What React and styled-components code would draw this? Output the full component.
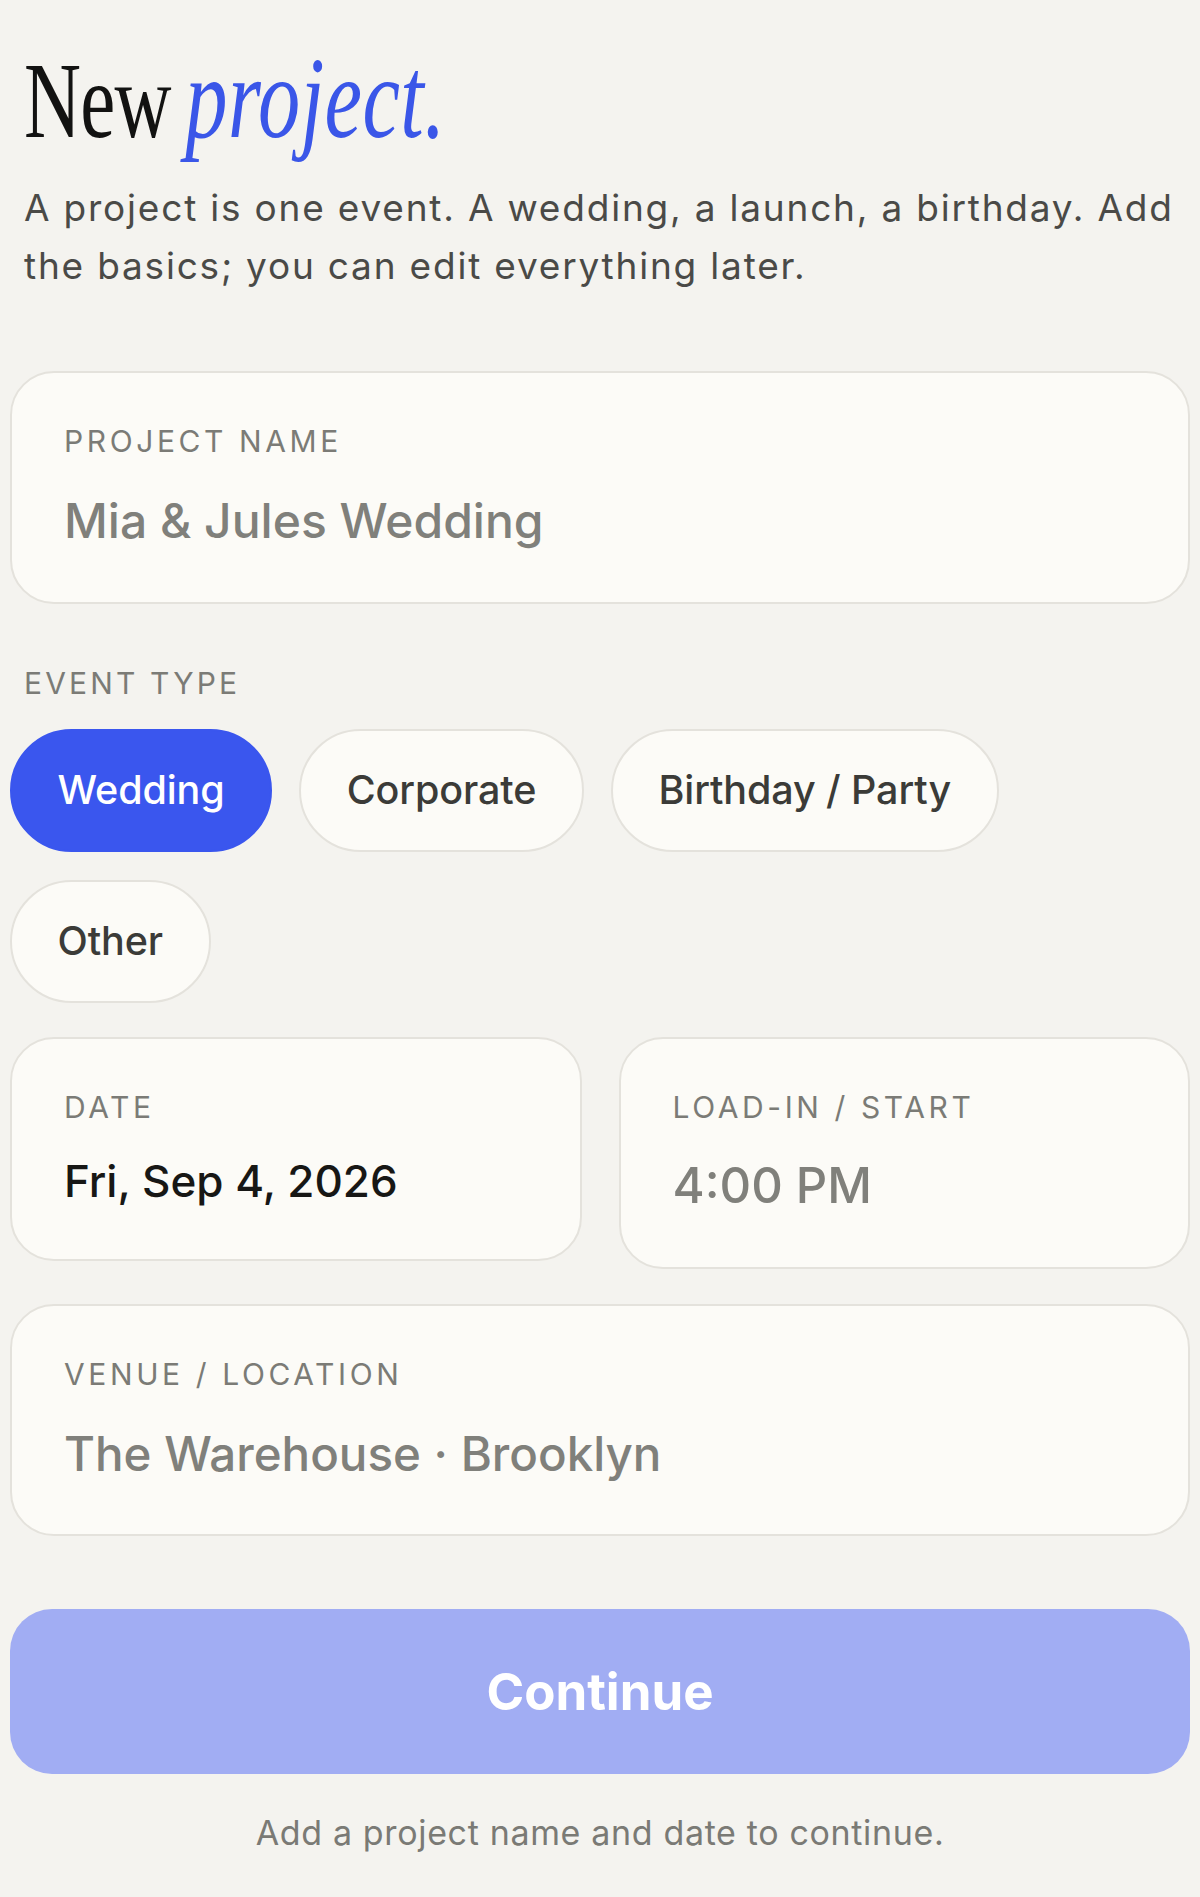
import React from "react";
import styled, { createGlobalStyle } from "styled-components";

const GlobalStyle = createGlobalStyle`
  html, body {
    margin: 0;
    padding: 0;
    background: #f4f3ef;
  }
  body {
    font-family: "Inter", "Noto Sans", sans-serif;
    -webkit-font-smoothing: antialiased;
  }
  * { box-sizing: border-box; }
`;

const Page = styled.main`
  min-height: 1897px;
  padding: 47px 10px 40px;
  display: flex;
  flex-direction: column;
`;

const Intro = styled.header`
  padding: 0 0 0 14px;
  display: flex;
  flex-direction: column;
  gap: 24px;
`;

const Title = styled.h1`
  margin: 0;
  display: inline-block;
  align-self: flex-start;
  font-family: "Liberation Serif", "Times New Roman", serif;
  font-weight: 400;
  font-size: 108px;
  line-height: 1;
  letter-spacing: -1px;
  word-spacing: -6px;
  color: #121211;
  transform: scaleX(0.73);
  transform-origin: left center;
  white-space: nowrap;
`;

const Accent = styled.em`
  font-style: italic;
  font-size: 1.07em;
  line-height: 0;
  letter-spacing: 0.6px;
  color: #3a56e8;
`;

const Lead = styled.p`
  margin: 0;
  font-size: 37px;
  line-height: 58px;
  color: #4a4a47;
  letter-spacing: 1.8px;
`;

const Form = styled.section`
  margin-top: 76px;
  display: flex;
  flex-direction: column;
`;

const FieldCard = styled.div`
  background: #fcfbf7;
  border: 2px solid #e4e2dc;
  border-radius: 44px;
  padding: 50px 52px 52px;
  display: flex;
  flex-direction: column;
`;

const FieldLabel = styled.span`
  font-size: 30px;
  line-height: 36px;
  letter-spacing: 0.12em;
  text-transform: uppercase;
  color: #7b7b76;
`;

const FieldValue = styled.span`
  margin-top: ${(p) => p.$gap}px;
  font-size: ${(p) => p.$size}px;
  line-height: 1.2;
  font-weight: 500;
  color: ${(p) => (p.$filled ? "#171715" : "#80807b")};
`;

const SectionLabel = styled.h2`
  margin: 61px 0 0;
  padding: 0 14px;
  font-size: 30px;
  line-height: 36px;
  font-weight: 400;
  letter-spacing: 0.105em;
  text-transform: uppercase;
  color: #7b7b76;
`;

const ChipRow = styled.div`
  margin-top: 28px;
  display: flex;
  flex-wrap: wrap;
  gap: 28px 27px;
`;

const Chip = styled.button`
  height: 123px;
  padding: 0 45.5px;
  border-radius: 999px;
  border: 2px solid ${(p) => (p.$active ? "#3a56ee" : "#e4e2dc")};
  background: ${(p) => (p.$active ? "#3a56ee" : "#fcfbf7")};
  color: ${(p) => (p.$active ? "#ffffff" : "#3b3b38")};
  font-family: "Inter", "Noto Sans", sans-serif;
  font-size: 39.5px;
  font-weight: 500;
  letter-spacing: -0.1px;
  display: inline-flex;
  align-items: center;
  cursor: pointer;
`;

const TwoCol = styled.div`
  margin-top: 34px;
  display: grid;
  grid-template-columns: 1fr 1fr;
  gap: 37px;
  align-items: start;
`;

const Stack = styled.div`
  margin-top: 35px;
`;

const PrimaryButton = styled.button`
  margin-top: 73px;
  height: 165px;
  width: 100%;
  border: none;
  border-radius: 42px;
  background: #a1adf3;
  color: #ffffff;
  font-family: "Inter", "Noto Sans", sans-serif;
  font-size: 51px;
  font-weight: 700;
  cursor: not-allowed;
`;

const Hint = styled.p`
  margin: 39px 0 0;
  text-align: center;
  font-size: 34px;
  line-height: 1.2;
  color: #7a7a75;
  letter-spacing: 0.65px;
`;

const eventTypes = ["Wedding", "Corporate", "Birthday / Party", "Other"];

function Field({ label, value, size = 48, gap = 32, filled = false }) {
  return (
    <FieldCard>
      <FieldLabel>{label}</FieldLabel>
      <FieldValue $size={size} $gap={gap} $filled={filled}>
        {value}
      </FieldValue>
    </FieldCard>
  );
}

export default function App() {
  return (
    <>
      <GlobalStyle />
      <Page>
        <Intro>
          <Title>
            New <Accent>project.</Accent>
          </Title>
          <Lead>
            A project is one event. A wedding, a launch, a birthday. Add the
            basics; you can edit everything later.
          </Lead>
        </Intro>

        <Form>
          <Field label="Project name" value="Mia & Jules Wedding" gap={33} />

          <SectionLabel>Event type</SectionLabel>
          <ChipRow>
            {eventTypes.map((t) => (
              <Chip key={t} $active={t === "Wedding"}>
                {t}
              </Chip>
            ))}
          </ChipRow>

          <TwoCol>
            <Field label="Date" value="Fri, Sep 4, 2026" size={44} gap={30} filled />
            <Field label="Load-in / Start" value="4:00 PM" size={49} gap={32} />
          </TwoCol>

          <Stack>
            <Field label="Venue / Location" value="The Warehouse · Brooklyn" size={47.5} gap={33} />
          </Stack>

          <PrimaryButton>Continue</PrimaryButton>
          <Hint>Add a project name and date to continue.</Hint>
        </Form>
      </Page>
    </>
  );
}
